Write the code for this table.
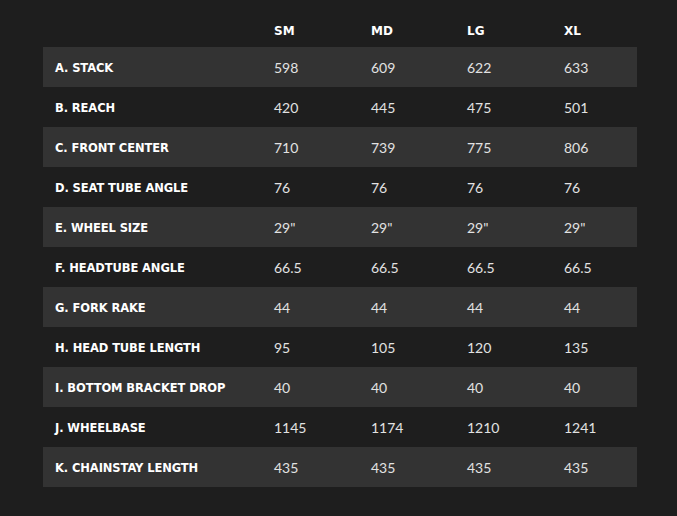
import React from "react";

const rows = [
  ["A. STACK", "598", "609", "622", "633"],
  ["B. REACH", "420", "445", "475", "501"],
  ["C. FRONT CENTER", "710", "739", "775", "806"],
  ["D. SEAT TUBE ANGLE", "76", "76", "76", "76"],
  ["E. WHEEL SIZE", "29\"", "29\"", "29\"", "29\""],
  ["F. HEADTUBE ANGLE", "66.5", "66.5", "66.5", "66.5"],
  ["G. FORK RAKE", "44", "44", "44", "44"],
  ["H. HEAD TUBE LENGTH", "95", "105", "120", "135"],
  ["I. BOTTOM BRACKET DROP", "40", "40", "40", "40"],
  ["J. WHEELBASE", "1145", "1174", "1210", "1241"],
  ["K. CHAINSTAY LENGTH", "435", "435", "435", "435"],
];

const cols = "grid grid-cols-[219px_97px_96px_97px_85px]";

export default function App() {
  return (
    <div className="w-[677px] h-[516px] bg-[#1e1e1e] pl-[43px]">
      <div className="w-[594px]">
        <div className={`${cols} h-[47px] items-end pb-[7px] text-white font-bold text-[12px] [font-family:'DejaVu_Sans',sans-serif]`}>
          <div></div>
          <div className="pl-[12px]">SM</div>
          <div className="pl-[12px]">MD</div>
          <div className="pl-[12px]">LG</div>
          <div className="pl-[12px]">XL</div>
        </div>
        {rows.map((r, i) => (
          <div
            key={r[0]}
            className={`${cols} h-[40px] pt-[4px] items-center ${i % 2 === 0 ? "bg-[#333333]" : "bg-[#1e1e1e]"}`}
          >
            <div className="pl-[12px] text-white font-bold text-[11.5px] [font-family:'DejaVu_Sans',sans-serif] tracking-[-0.1px]">
              {r[0]}
            </div>
            {r.slice(1).map((v, j) => (
              <div key={j} className="pl-[12px] pb-[4px] text-[#e2e2e2] text-[14px] [font-family:Lato,sans-serif]">
                {v}
              </div>
            ))}
          </div>
        ))}
      </div>
    </div>
  );
}
